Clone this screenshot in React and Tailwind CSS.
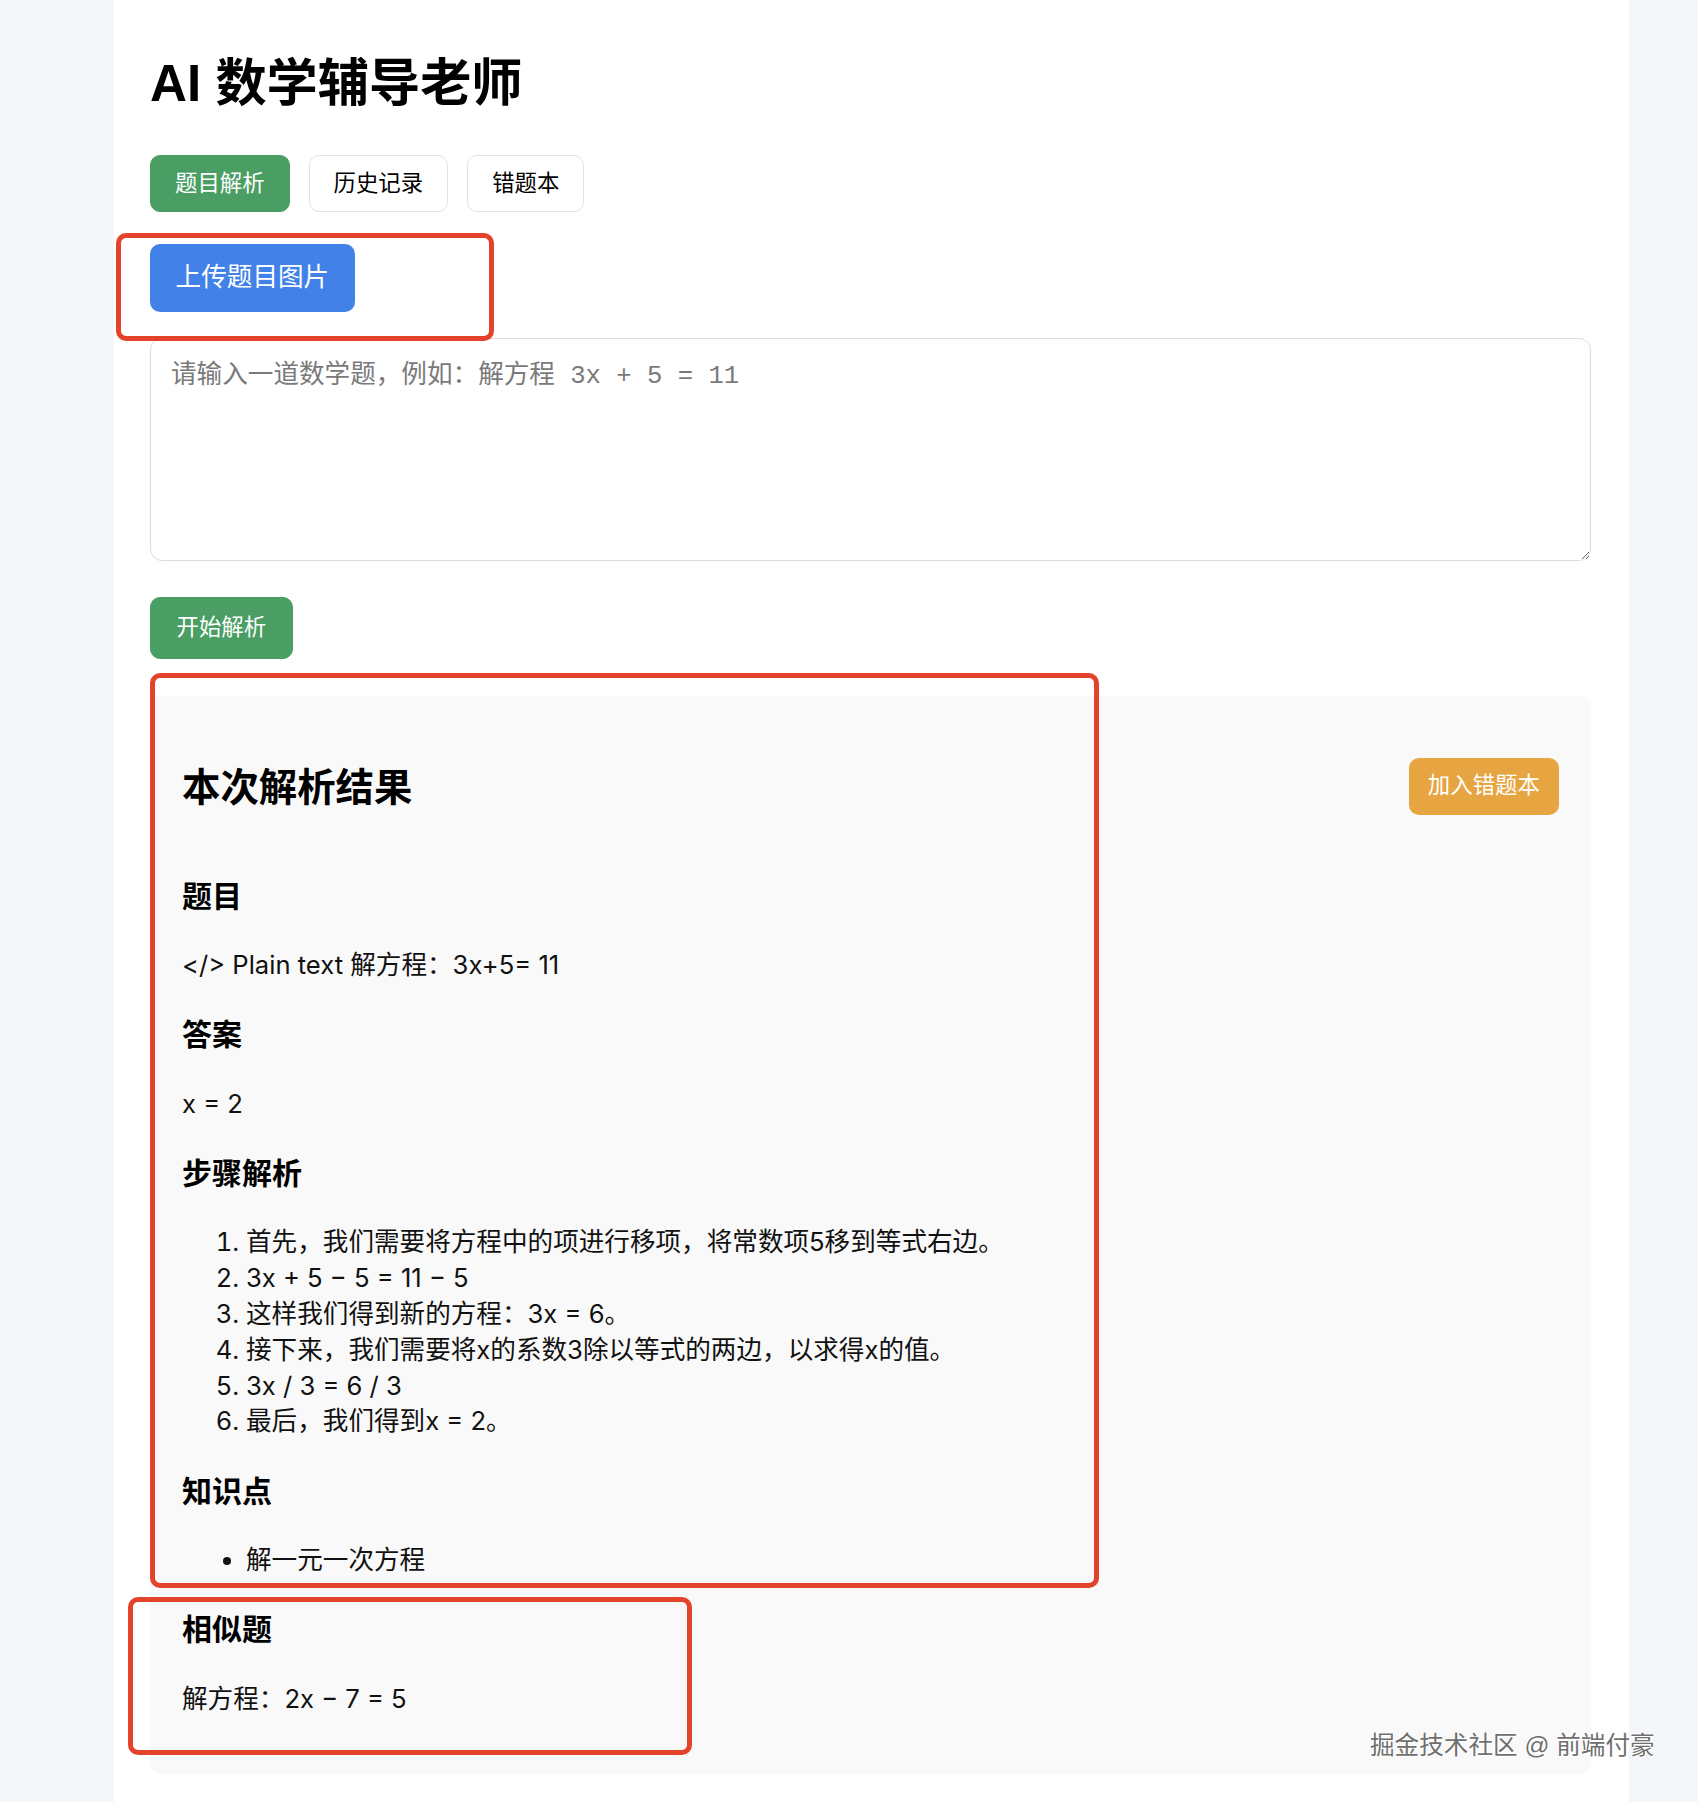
import React from "react";

const steps = [
  "首先，我们需要将方程中的项进行移项，将常数项5移到等式右边。",
  "3x + 5 − 5 = 11 − 5",
  "这样我们得到新的方程：3x = 6。",
  "接下来，我们需要将x的系数3除以等式的两边，以求得x的值。",
  "3x / 3 = 6 / 3",
  "最后，我们得到x = 2。",
];

const body = "text-[25.6px] leading-[1.4] font-['Inter','Noto_Sans_CJK_SC',sans-serif]";
const h3 = "mt-[31.4px] mb-[29.4px] text-[30px] leading-[1.4] font-bold text-black";

export default function App() {
  return (
    <div className="relative min-h-[1802px] bg-[#f5f6fa] pl-[114px] font-['Liberation_Sans','Noto_Sans_CJK_SC',sans-serif] text-[#111]">
      <div className="w-[1515px] min-h-[1802px] bg-white pt-[48px] pl-[36px] pr-[38px] pb-[30px]">
        <h1 className="text-[51.2px] leading-[1.4] font-bold text-black">AI 数学辅导老师</h1>

        <div className="mt-[35px] flex gap-[19px]">
          <button className="block rounded-[10px] border border-[#4a9e64] bg-[#4a9e64] px-[24px] py-[12px] text-[22.4px] leading-[1.4] text-white">
            题目解析
          </button>
          <button className="block rounded-[10px] border border-[#e2e2e2] bg-white px-[24px] py-[12px] text-[22.4px] leading-[1.4] text-black">
            历史记录
          </button>
          <button className="block rounded-[10px] border border-[#e2e2e2] bg-white px-[24px] py-[12px] text-[22.4px] leading-[1.4] text-black">
            错题本
          </button>
        </div>

        <div className="mt-[32px]">
          <button className="block rounded-[10px] bg-[#4181e8] px-[25.6px] py-[16px] text-[25.6px] leading-[1.4] text-white">
            上传题目图片
          </button>
        </div>

        <textarea
          className="mt-[26px] block h-[223px] w-full rounded-[12px] border border-[#dcdcdc] bg-white p-[20px] font-['Liberation_Mono','Noto_Sans_CJK_SC',monospace] text-[25.6px] leading-[1.4] text-[#222] placeholder:text-[#7a7a7a] outline-none"
          placeholder="请输入一道数学题，例如：解方程 3x + 5 = 11"
        />

        <button className="mt-[36px] block rounded-[10px] border border-[#4a9e64] bg-[#4a9e64] px-[25.6px] py-[14.4px] text-[22.4px] leading-[1.4] text-white">
          开始解析
        </button>

        <div className="mt-[37px] rounded-[12px] bg-[#f9f9f9] px-[32px] pt-[32px] pb-[32px]">
          <div className="flex items-center justify-between">
            <h2 className="mt-[33px] mb-[29.5px] text-[38.4px] leading-[1.4] font-bold text-black">本次解析结果</h2>
            <button className="block rounded-[10px] bg-[#e6a541] px-[19.2px] py-[12.8px] text-[22.4px] leading-[1.4] text-white">
              加入错题本
            </button>
          </div>

          <h3 className={h3}>题目</h3>
          <p className={`my-[25.6px] ${body}`}>&lt;/&gt; Plain text 解方程：3x+5= 11</p>

          <h3 className={h3}>答案</h3>
          <p className={`my-[25.6px] ${body}`}>x = 2</p>

          <h3 className={h3}>步骤解析</h3>
          <ol className={`my-[25.6px] list-decimal pl-[64px] ${body}`}>
            {steps.map((s, i) => (
              <li key={i}>{s}</li>
            ))}
          </ol>

          <h3 className={h3}>知识点</h3>
          <ul className={`my-[25.6px] list-disc pl-[64px] ${body}`}>
            <li>解一元一次方程</li>
          </ul>

          <h3 className={h3}>相似题</h3>
          <p className={`my-[25.6px] ${body}`}>解方程：2x − 7 = 5</p>
        </div>
      </div>

      {/* annotation boxes */}
      <div className="pointer-events-none absolute left-[116px] top-[233px] h-[108px] w-[378px] rounded-[10px] border-[5px] border-[#e4432b]" />
      <div className="pointer-events-none absolute left-[150px] top-[673px] h-[915px] w-[949px] rounded-[10px] border-[5px] border-[#e4432b]" />
      <div className="pointer-events-none absolute left-[128px] top-[1597px] h-[158px] w-[564px] rounded-[10px] border-[5px] border-[#e4432b]" />

      {/* watermark */}
      <div className="pointer-events-none absolute left-[1370px] top-[1729px] text-[24.6px] leading-[1.4] text-[#6f6f6f] [text-shadow:1px_1px_0_#ffffff,-1px_-1px_0_#ffffff]">
        掘金技术社区 @ 前端付豪
      </div>
    </div>
  );
}
